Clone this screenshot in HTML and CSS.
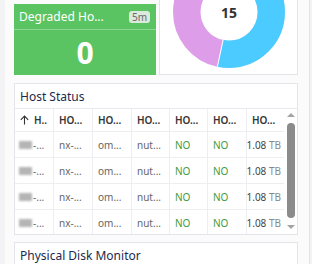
FILE: index.html
```html
<!DOCTYPE html>
<html>
<head>
<meta charset="utf-8">
<link rel="stylesheet" href="styles.css">
</head>
<body>
<div class="wrap">
  <div class="top">
    <div class="stat">
      <div class="stat-head"><span class="stat-title">Degraded Ho...</span><span class="badge">5m</span></div>
      <div class="stat-val">0</div>
    </div>
    <div class="panel donut-panel">
      <svg class="donut" width="114" height="114" viewBox="0 0 114 114">
        <g transform="rotate(-90 57 57)">
          <circle cx="57" cy="57" r="42.25" fill="none" stroke="#4bcbff" stroke-width="27.5" stroke-dasharray="141.58 265.46"/>
          <circle cx="57" cy="57" r="42.25" fill="none" stroke="#dd9de9" stroke-width="27.5" stroke-dasharray="123.88 265.46" stroke-dashoffset="-141.58"/>
        </g>
        <line x1="57" y1="1" x2="57" y2="29" stroke="#fff" stroke-width="1"/>
        <line x1="51.2" y1="84.6" x2="45.4" y2="111.8" stroke="#fff" stroke-width="1"/>
        <text x="57" y="57" class="donut-num">15</text>
      </svg>
    </div>
  </div>

  <div class="panel host">
    <div class="ptitle">Host Status</div>
    <div class="tbl-wrap">
      <div class="tbl">
        <div class="row head">
          <div class="cell first"><svg class="arrow" width="9" height="10" viewBox="0 0 9 10"><path d="M4.5 9.5V1.2M0.8 4.8L4.5 1.1L8.2 4.8" fill="none" stroke="#333" stroke-width="1.1"/></svg><span>H..</span></div>
          <div class="cell">HO...</div>
          <div class="cell">HO...</div>
          <div class="cell">HO...</div>
          <div class="cell">HO...</div>
          <div class="cell">HO...</div>
          <div class="cell">HO...</div>
        </div>
        <div class="body">
          <div class="row">
            <div class="cell first"><span class="blur"></span>-...</div>
            <div class="cell">nx-...</div>
            <div class="cell">om...</div>
            <div class="cell">nut...</div>
            <div class="cell no">NO</div>
            <div class="cell no">NO</div>
            <div class="cell r"><span class="num">1.08</span>&nbsp;<span class="unit">TB</span></div>
          </div>
          <div class="row">
            <div class="cell first"><span class="blur"></span>-...</div>
            <div class="cell">nx-...</div>
            <div class="cell">om...</div>
            <div class="cell">nut...</div>
            <div class="cell no">NO</div>
            <div class="cell no">NO</div>
            <div class="cell r"><span class="num">1.08</span>&nbsp;<span class="unit">TB</span></div>
          </div>
          <div class="row">
            <div class="cell first"><span class="blur"></span>-...</div>
            <div class="cell">nx-...</div>
            <div class="cell">om...</div>
            <div class="cell">nut...</div>
            <div class="cell no">NO</div>
            <div class="cell no">NO</div>
            <div class="cell r"><span class="num">1.08</span>&nbsp;<span class="unit">TB</span></div>
          </div>
          <div class="row">
            <div class="cell first"><span class="blur"></span>-...</div>
            <div class="cell">nx-...</div>
            <div class="cell">om...</div>
            <div class="cell">nut...</div>
            <div class="cell no">NO</div>
            <div class="cell no">NO</div>
            <div class="cell r"><span class="num">1.08</span>&nbsp;<span class="unit">TB</span></div>
          </div>
        </div>
      </div>
      <div class="sbar">
        <div class="sb-up"></div>
        <div class="sb-thumb"></div>
        <div class="sb-down"></div>
      </div>
    </div>
  </div>

  <div class="panel disk">
    <div class="ptitle">Physical Disk Monitor</div>
  </div>
</div>
</body>
</html>
```

FILE: styles.css
```css
html, body {
  margin: 0;
  height: 264px;
  overflow: hidden;
}
body {
  background: #f3f3f6;
  font-family: "Noto Sans", sans-serif;
}
.wrap {
  margin-left: 5px;
  width: 305px;
  height: 264px;
  box-sizing: border-box;
  background: #fbfbfc;
  border-right: 1px solid #e3e3e9;
  padding-left: 9px;
  overflow: hidden;
}
.top {
  display: grid;
  grid-template-columns: 142px 139px;
  column-gap: 3px;
  align-items: end;
  margin-top: -60px;
  width: 284px;
}
.stat {
  height: 71px;
  background: #5ac463;
  display: flex;
  flex-direction: column;
}
.stat-head {
  height: 25px;
  display: flex;
  align-items: center;
  justify-content: space-between;
  padding: 0 6px 0 5px;
  border-bottom: 1px solid rgba(255, 255, 255, 0.3);
}
.stat-title {
  color: #fff;
  font-size: 12px;
}
.badge {
  font-size: 10px;
  color: #6a6a6a;
  background: rgba(238, 238, 238, 0.88);
  border-radius: 3px;
  padding: 0 3px;
  height: 12px;
  line-height: 12px;
}
.stat-val {
  flex: 1;
  display: flex;
  align-items: center;
  justify-content: center;
  color: #fff;
  font-weight: 700;
  font-size: 30px;
}
.panel {
  background: #fff;
  border: 1px solid #e4e4ea;
  box-sizing: border-box;
  width: 284px;
}
.donut-panel {
  width: 139px;
  height: 135px;
  display: flex;
  justify-content: center;
  align-items: flex-end;
  padding-bottom: 5px;
}
.donut {
  display: block;
}
.donut-num {
  font-size: 14px;
  font-weight: 700;
  fill: #333;
  text-anchor: middle;
  dominant-baseline: central;
}
.host {
  margin-top: 8px;
  height: 152px;
}
.ptitle {
  height: 24px;
  border-bottom: 1px solid #e8e8ee;
  padding-left: 5px;
  display: flex;
  align-items: center;
  font-size: 12px;
  color: #1c2a4e;
}
.tbl-wrap {
  display: flex;
  height: 125px;
}
.tbl {
  width: 269px;
}
.row {
  display: grid;
  grid-template-columns: 38px 39px 39px 38px 38px 39px 38px;
  border-bottom: 1px solid #eeeef2;
  height: 26px;
  box-sizing: border-box;
}
.row.head {
  height: 23px;
}
.body {
  height: 102px;
  overflow: hidden;
}
.cell {
  border-left: 1px solid #eeeef2;
  padding-left: 5px;
  display: flex;
  align-items: center;
  font-size: 10px;
  color: #666;
  white-space: nowrap;
  overflow: hidden;
}
.cell.first {
  border-left: none;
  padding-left: 4px;
}
.head .cell {
  color: #333;
  font-weight: 600;
}
.head .cell.first {
  padding-left: 5px;
}
.arrow {
  margin-right: 5px;
  flex: none;
}
.cell.no {
  color: #3f9a3f;
}
.cell.r {
  justify-content: flex-end;
  padding-right: 3px;
}
.num {
  color: #444;
}
.unit {
  color: #888;
}
.blur {
  display: inline-block;
  width: 13px;
  height: 8px;
  background: #b5b5b5;
  filter: blur(1.2px);
  margin-right: 1px;
}
.sbar {
  width: 13px;
  display: flex;
  flex-direction: column;
  align-items: center;
}
.sb-up {
  margin-top: 4px;
  width: 0;
  height: 0;
  border-left: 4px solid transparent;
  border-right: 4px solid transparent;
  border-bottom: 4px solid #a3a3a3;
}
.sb-thumb {
  margin-top: 6px;
  width: 8px;
  height: 95px;
  border-radius: 4px;
  background: #8b8b8b;
}
.sb-down {
  margin-top: 7px;
  width: 0;
  height: 0;
  border-left: 4px solid transparent;
  border-right: 4px solid transparent;
  border-top: 4px solid #a3a3a3;
}
.disk {
  margin-top: 7px;
  height: 60px;
}
```
